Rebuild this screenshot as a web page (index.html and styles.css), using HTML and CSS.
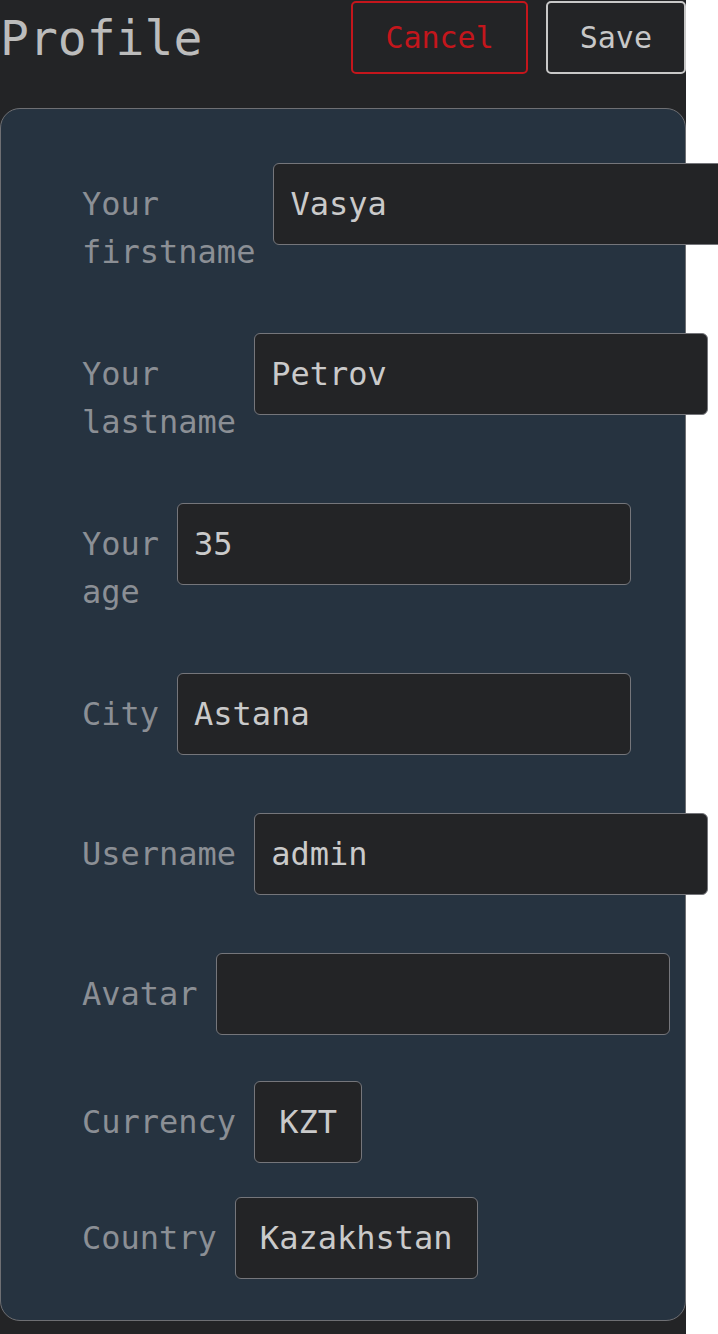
FILE: index.html
```html
<!DOCTYPE html>
<html lang="en">
<head>
<meta charset="utf-8">
<title>Profile</title>
<link rel="stylesheet" href="styles.css">
</head>
<body>
<div class="app">
  <header class="topbar">
    <h1 class="title">Profile</h1>
    <div class="actions">
      <button class="btn btn-cancel" type="button">Cancel</button>
      <button class="btn btn-save" type="button">Save</button>
    </div>
  </header>
  <form class="panel">
    <div class="row"><label class="label">Your firstname</label><input class="field" type="text" value="Vasya"></div>
    <div class="row"><label class="label">Your lastname</label><input class="field" type="text" value="Petrov"></div>
    <div class="row"><label class="label">Your age</label><input class="field" type="text" value="35"></div>
    <div class="row"><label class="label">City</label><input class="field" type="text" value="Astana"></div>
    <div class="row"><label class="label">Username</label><input class="field" type="text" value="admin"></div>
    <div class="row"><label class="label">Avatar</label><input class="field" type="text" value=""></div>
    <div class="row"><label class="label">Currency</label><button class="choice" type="button">KZT</button></div>
    <div class="row"><label class="label">Country</label><button class="choice" type="button">Kazakhstan</button></div>
  </form>
</div>
</body>
</html>
```
FILE: styles.css
```css
html, body {
  margin: 0;
  padding: 0;
  background: #ffffff;
}

.app {
  width: 686px;
  min-height: 1334px;
  background: #232426;
  font-family: "DejaVu Sans Mono", "Liberation Mono", monospace;
}

.topbar {
  display: flex;
  align-items: center;
  justify-content: space-between;
  height: 75px;
  margin-bottom: 33px;
}

.title {
  margin: 0;
  font-size: 48px;
  font-weight: normal;
  line-height: 72px;
  color: #bcbcbc;
}

.actions {
  display: flex;
  gap: 18px;
}

.btn {
  font-family: inherit;
  font-size: 30px;
  line-height: 45px;
  padding: 12px 32px;
  border-radius: 5px;
  background: #232426;
  cursor: pointer;
}

.btn-cancel {
  color: #c4161c;
  border: 2px solid #c4161c;
}

.btn-save {
  color: #c8c8c8;
  border: 2px solid #c8c8c8;
}

.panel {
  box-sizing: border-box;
  width: 686px;
  margin: 0;
  padding: 42px 79px 41px;
  background: #263340;
  border: 1px solid #6e6f73;
  border-radius: 20px;
  display: flex;
  flex-direction: column;
  gap: 34px;
}

.row {
  display: flex;
  align-items: baseline;
  gap: 18px;
}

.label {
  flex: 0 1 auto;
  margin: 12px 0 11px 2px;
  font-size: 32px;
  line-height: 48px;
  color: #8b8f95;
}

.field {
  flex: 0 0 auto;
  box-sizing: border-box;
  width: 454px;
  height: 82px;
  margin: 12px 0;
  padding: 16px;
  border: 1px solid #75767b;
  border-radius: 6px;
  background: #232426;
  color: #cacaca;
  font-family: inherit;
  font-size: 32px;
  line-height: 48px;
  outline: none;
}

.choice {
  flex: 0 0 auto;
  box-sizing: border-box;
  height: 82px;
  padding: 16px 24px;
  border: 1px solid #75767b;
  border-radius: 6px;
  background: #232426;
  color: #cacaca;
  font-family: inherit;
  font-size: 32px;
  line-height: 48px;
}
```
